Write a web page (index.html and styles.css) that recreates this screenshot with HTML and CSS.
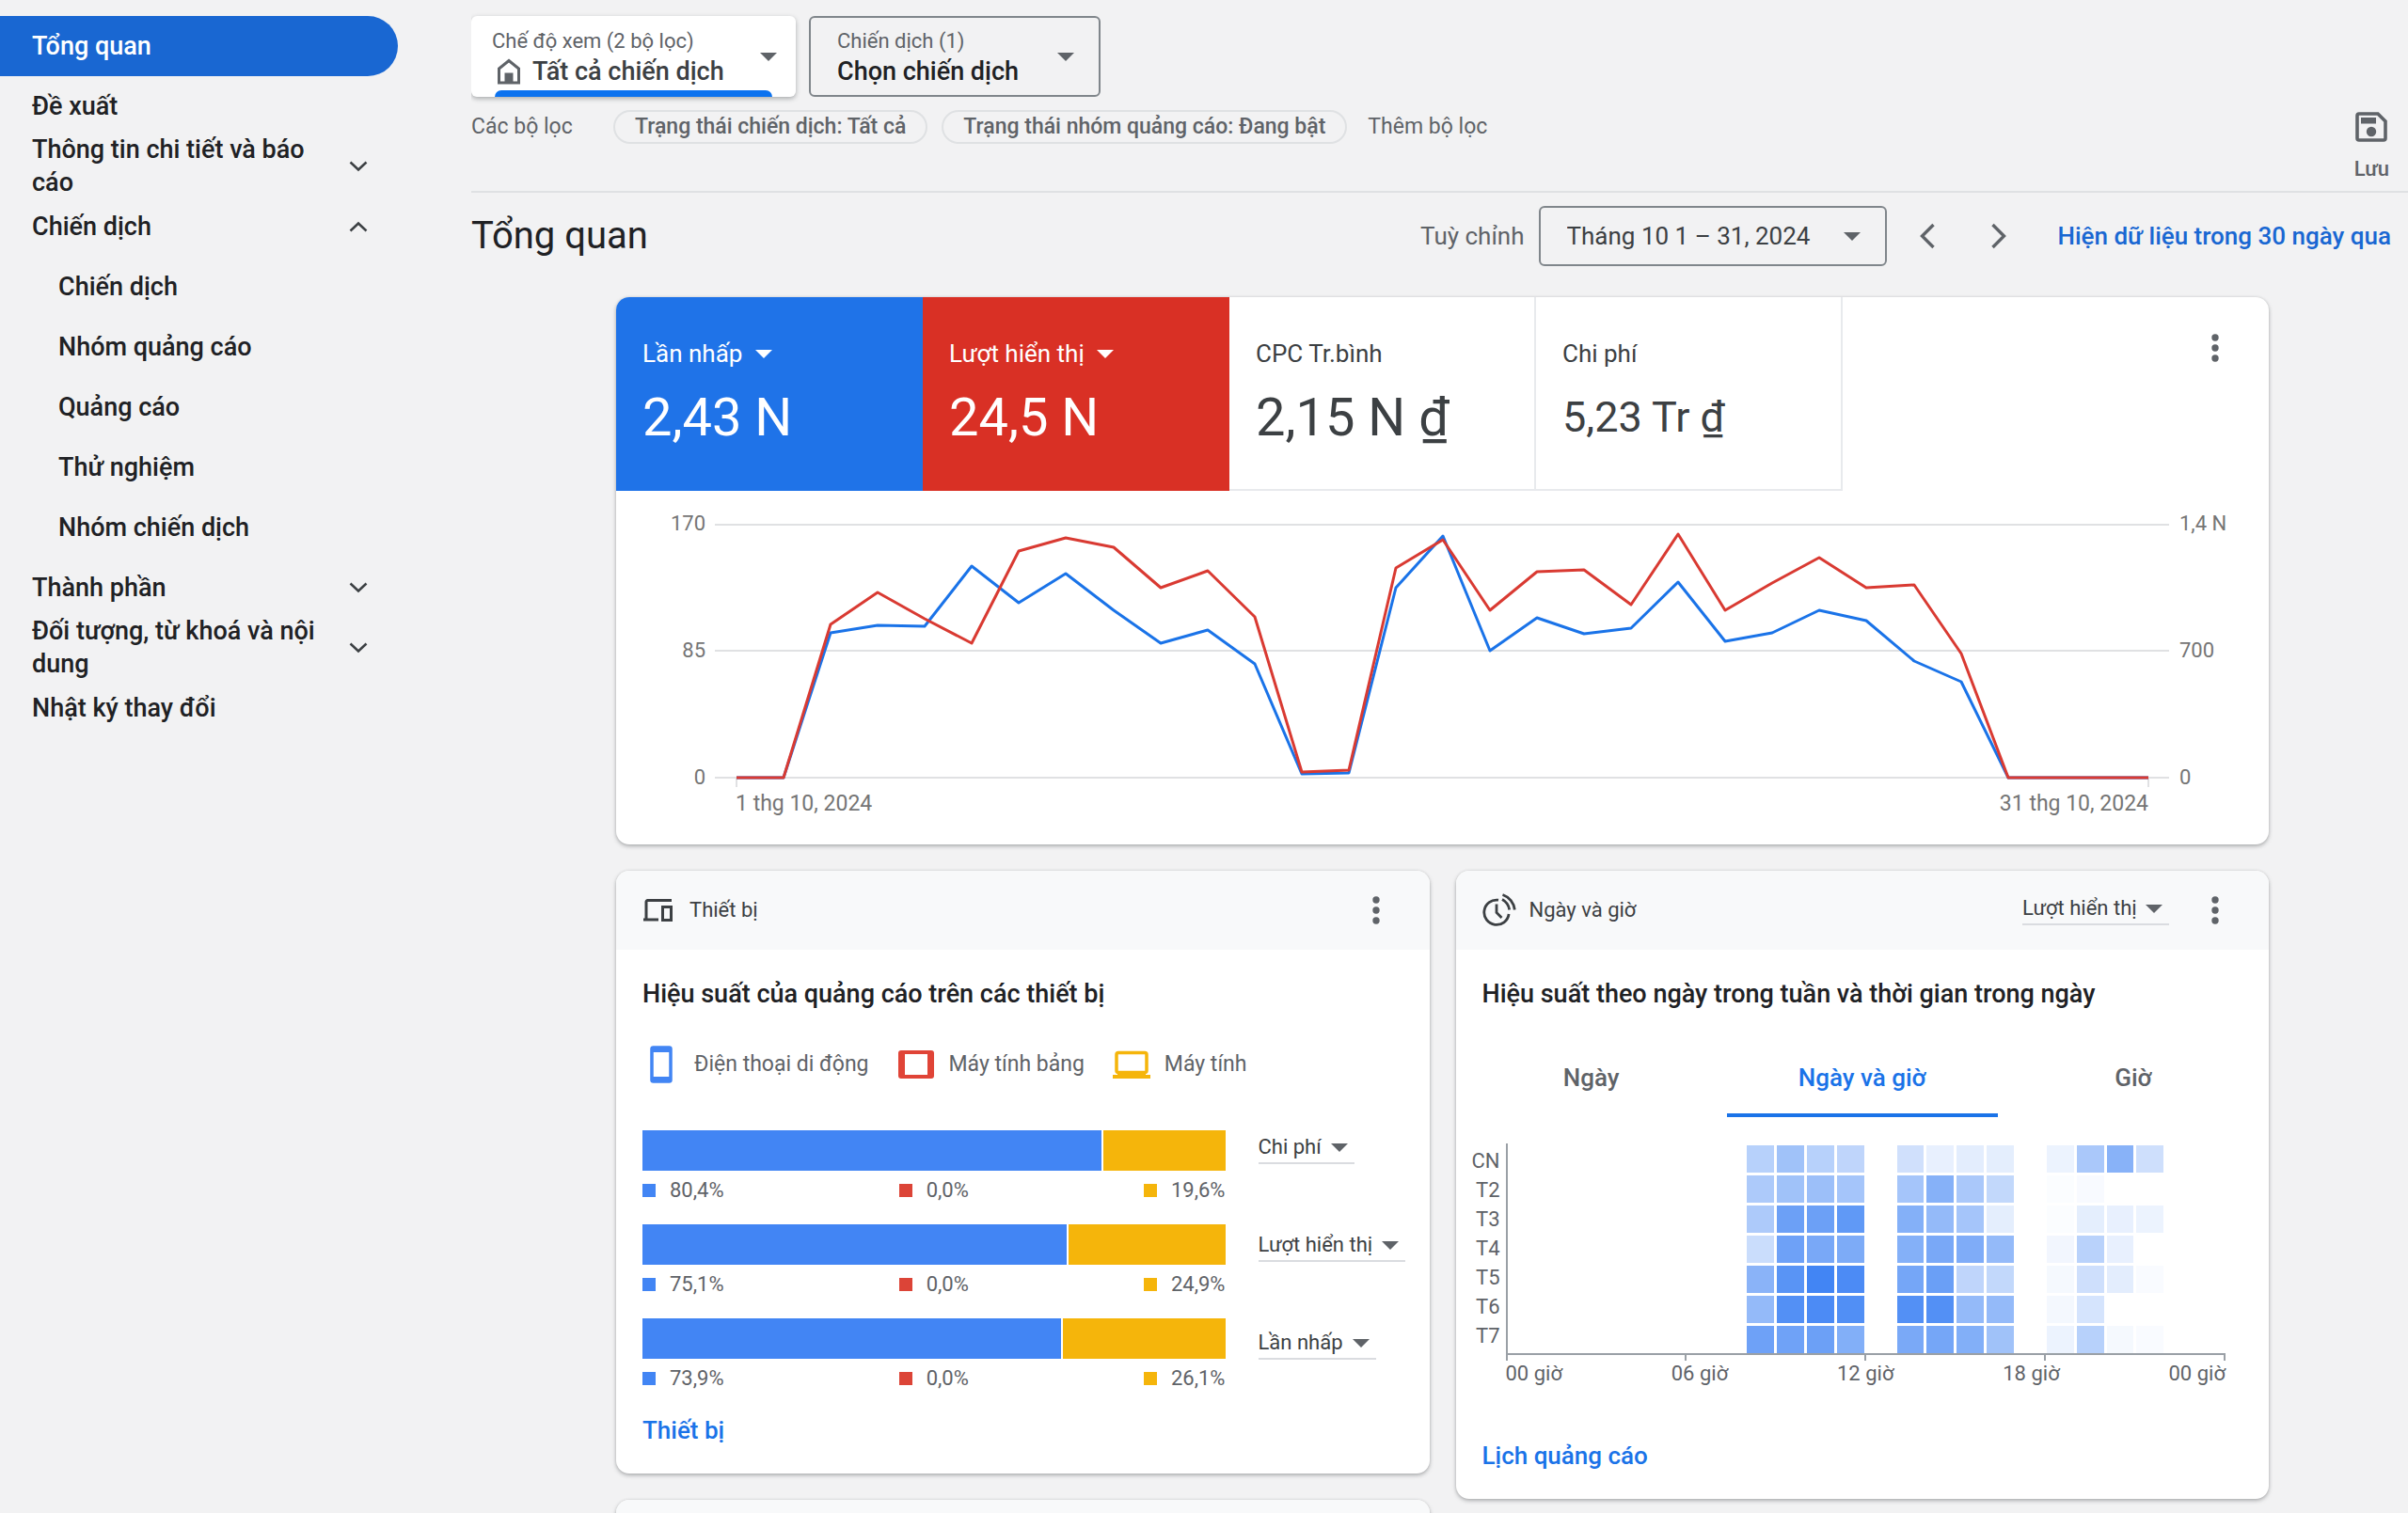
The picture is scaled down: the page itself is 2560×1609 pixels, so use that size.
FILE: index.html
```html
<!DOCTYPE html>
<html lang="vi">
<head>
<meta charset="utf-8">
<meta name="viewport" content="width=device-width, initial-scale=1">
<title>Tổng quan</title>
<link rel="stylesheet" href="styles.css">
</head>
<body>
<svg class="sprite" aria-hidden="true">
  <symbol id="i-down" viewBox="0 0 20 12"><path d="M1.500 1.500 10 9.500 18.500 1.500" fill="none" stroke="currentColor" stroke-width="2.500"/></symbol>
  <symbol id="i-up" viewBox="0 0 20 12"><path d="M1.500 10.500 10 2.500 18.500 10.500" fill="none" stroke="currentColor" stroke-width="2.500"/></symbol>
  <symbol id="i-dots" viewBox="0 0 8 30"><circle cx="4" cy="4" r="3.700"/><circle cx="4" cy="15" r="3.700"/><circle cx="4" cy="26" r="3.700"/></symbol>
</svg>

<nav class="sidebar" aria-label="Điều hướng">
  <a class="nav-item active" href="#">Tổng quan</a>
  <a class="nav-item" href="#">Đề xuất</a>
  <button class="nav-item" type="button"><span>Thông tin chi tiết và báo cáo</span><svg class="chevron"><use href="#i-down"/></svg></button>
  <button class="nav-item" type="button"><span>Chiến dịch</span><svg class="chevron"><use href="#i-up"/></svg></button>
  <a class="nav-item sub" href="#">Chiến dịch</a>
  <a class="nav-item sub" href="#">Nhóm quảng cáo</a>
  <a class="nav-item sub" href="#">Quảng cáo</a>
  <a class="nav-item sub" href="#">Thử nghiệm</a>
  <a class="nav-item sub" href="#">Nhóm chiến dịch</a>
  <button class="nav-item" type="button"><span>Thành phần</span><svg class="chevron"><use href="#i-down"/></svg></button>
  <button class="nav-item" type="button"><span>Đối tượng, từ khoá và nội dung</span><svg class="chevron"><use href="#i-down"/></svg></button>
  <a class="nav-item" href="#">Nhật ký thay đổi</a>
</nav>

<main class="main">
  <header class="toolbar">
    <div class="toolbar-left">
      <div class="scopes">
        <div class="scope scope-view">
          <div class="scope-text">
            <label class="scope-label" for="view">Chế độ xem (2 bộ lọc)</label>
            <div class="scope-value">
              <svg class="home" viewBox="0 0 26 28"><path d="M2.500 26V11L13 2.500 23.500 11V26Z" fill="none" stroke="currentColor" stroke-width="3"/><path d="M8.500 15.500h9V26h-9z" fill="currentColor"/></svg>
              <select id="view"><option>Tất cả chiến dịch</option></select>
            </div>
          </div>
          <span class="caret"></span>
        </div>
        <div class="scope scope-campaign">
          <div class="scope-text">
            <label class="scope-label" for="campaign">Chiến dịch (1)</label>
            <div class="scope-value"><select id="campaign"><option>Chọn chiến dịch</option></select></div>
          </div>
          <span class="caret"></span>
        </div>
      </div>
      <div class="filters">
        <span class="filters-title">Các bộ lọc</span>
        <button class="chip" type="button">Trạng thái chiến dịch: Tất cả</button>
        <button class="chip" type="button">Trạng thái nhóm quảng cáo: Đang bật</button>
        <button class="add-filter" type="button">Thêm bộ lọc</button>
      </div>
    </div>
    <button class="save" type="button">
      <svg viewBox="0 0 34 32"><path d="M4 2h20l8 8v18a2 2 0 0 1-2 2H4a2 2 0 0 1-2-2V4a2 2 0 0 1 2-2Z" fill="none" stroke="currentColor" stroke-width="3.600"/><path d="M6 6h16v6.500H6z" fill="currentColor"/><circle cx="17" cy="21" r="5.200" fill="currentColor"/></svg>
      <span>Lưu</span>
    </button>
  </header>

  <div class="title-row">
    <h1>Tổng quan</h1>
    <div class="date-tools">
      <label class="custom" for="range">Tuỳ chỉnh</label>
      <div class="date-box"><select id="range"><option>Tháng 10 1 – 31, 2024</option></select><span class="caret"></span></div>
      <button class="step" type="button" aria-label="Kỳ trước"><svg viewBox="0 0 18 28"><path d="M15.500 2 3.500 14l12 12" fill="none" stroke="currentColor" stroke-width="3.400"/></svg></button>
      <button class="step" type="button" aria-label="Kỳ sau"><svg viewBox="0 0 18 28"><path d="M2.500 2l12 12-12 12" fill="none" stroke="currentColor" stroke-width="3.400"/></svg></button>
      <a class="recent" href="#">Hiện dữ liệu trong 30 ngày qua</a>
    </div>
  </div>

  <div class="content">
    <section class="card">
      <div class="kpis">
        <div class="kpi kpi-blue">
          <div class="kpi-name"><select aria-label="Chỉ số 1"><option>Lần nhấp</option></select><span class="caret"></span></div>
          <div class="kpi-value">2,43 N</div>
        </div>
        <div class="kpi kpi-red">
          <div class="kpi-name"><select aria-label="Chỉ số 2"><option>Lượt hiển thị</option></select><span class="caret"></span></div>
          <div class="kpi-value">24,5 N</div>
        </div>
        <div class="kpi">
          <div class="kpi-name">CPC Tr.bình</div>
          <div class="kpi-value">2,15 N ₫</div>
        </div>
        <div class="kpi">
          <div class="kpi-name">Chi phí</div>
          <div class="kpi-value kpi-value-small">5,23 Tr ₫</div>
        </div>
        <button class="more" type="button" aria-label="Tuỳ chọn khác"><svg><use href="#i-dots"/></svg></button>
      </div>
      <div class="chart">
        <div class="scale scale-left"><span>170</span><span>85</span><span>0</span></div>
        <div class="plot">
          <svg class="lines" viewBox="0 0 1546 280" preserveAspectRatio="none" role="img" aria-label="Lần nhấp và lượt hiển thị">
            <path class="grid" d="M0 1H1546M0 135H1546M0 270H1546M23 270V280M1524 270V280"/>
            <polyline class="clicks" points="23,270 73,270 123,116 173,108 223,109 273,45 323,84 373,53 424,92 474,127 524,113 574,149 624,266 674,265 724,68 774,13 824,135 874,100 924,117 974,111 1024,62 1074,125 1124,116 1174,92 1224,103 1275,146 1325,168 1375,270 1425,270 1475,270 1524,270"/>
            <polyline class="views" points="23,270 73,270 123,107 173,73 223,101 273,127 323,29 373,15 424,25 474,68 524,50 574,99 624,264 674,262 724,47 774,17 824,92 874,51 924,49 974,86 1024,11 1074,92 1124,63 1174,36 1224,68 1275,65 1325,138 1375,270 1425,270 1475,270 1524,270"/>
          </svg>
          <div class="dates"><span>1 thg 10, 2024</span><span>31 thg 10, 2024</span></div>
        </div>
        <div class="scale scale-right"><span>1,4 N</span><span>700</span><span>0</span></div>
      </div>
    </section>

    <div class="columns">
      <div class="column">
        <section class="card">
          <div class="card-head">
            <svg class="head-icon" viewBox="0 0 36 36"><path d="M4 29V9.500a1.500 1.500 0 0 1 1.500-1.500H31M1 28.500H17" transform="translate(0 -.5)" fill="none" stroke="currentColor" stroke-width="3"/><path d="M21.500 14.500h9v14h-9z" fill="none" stroke="currentColor" stroke-width="3"/></svg>
            <span class="head-title">Thiết bị</span>
            <button class="more" type="button" aria-label="Tuỳ chọn khác"><svg><use href="#i-dots"/></svg></button>
          </div>
          <div class="card-body">
            <h2>Hiệu suất của quảng cáo trên các thiết bị</h2>
            <ul class="legend">
              <li><svg viewBox="0 0 40 40"><rect x="10" y="2" width="20" height="36" rx="1.500" fill="none" stroke="#4285f4" stroke-width="3.500"/><path d="M9 1h22v6H9zM9 33h22v6H9z" fill="#4285f4"/></svg>Điện thoại di động</li>
              <li><svg viewBox="0 0 40 40"><rect x="3" y="7" width="34" height="26" rx="1" fill="none" stroke="#e04437" stroke-width="4"/><path d="M3 7h5v26H3zM32 7h5v26h-5z" fill="#e04437"/></svg>Máy tính bảng</li>
              <li><svg viewBox="0 0 40 40"><rect x="4" y="7.500" width="32" height="21" rx="2" fill="none" stroke="#f5b50b" stroke-width="3.500"/><path d="M0 31h40v4H0zM5 27h30v5H5z" fill="#f5b50b"/></svg>Máy tính</li>
            </ul>
            <div class="devices">
              <div class="bars">
                <div class="bar-group">
                  <div class="bar"><span class="blue" style="width:79%"></span><span class="yellow" style="width:21%"></span></div>
                  <div class="shares"><span class="share blue-key">80,4%</span><span class="share red-key">0,0%</span><span class="share yellow-key">19,6%</span></div>
                </div>
                <div class="bar-group">
                  <div class="bar"><span class="blue" style="width:73%"></span><span class="yellow" style="width:27%"></span></div>
                  <div class="shares"><span class="share blue-key">75,1%</span><span class="share red-key">0,0%</span><span class="share yellow-key">24,9%</span></div>
                </div>
                <div class="bar-group">
                  <div class="bar"><span class="blue" style="width:72%"></span><span class="yellow" style="width:28%"></span></div>
                  <div class="shares"><span class="share blue-key">73,9%</span><span class="share red-key">0,0%</span><span class="share yellow-key">26,1%</span></div>
                </div>
              </div>
              <div class="pickers">
                <div class="picker"><select aria-label="Chỉ số của thanh 1"><option>Chi phí</option></select><span class="caret"></span></div>
                <div class="picker"><select aria-label="Chỉ số của thanh 2"><option>Lượt hiển thị</option></select><span class="caret"></span></div>
                <div class="picker"><select aria-label="Chỉ số của thanh 3"><option>Lần nhấp</option></select><span class="caret"></span></div>
              </div>
            </div>
            <a class="card-link" href="#">Thiết bị</a>
          </div>
        </section>
        <section class="card"><div class="card-head"></div></section>
      </div>

      <div class="column">
        <section class="card">
          <div class="card-head">
            <svg class="head-icon" viewBox="0 0 36 36"><g fill="none" stroke="currentColor" stroke-width="2.800"><path d="M17 7.200A13.200 13.200 0 1 0 28.100 22"/><path d="M15 11.500V20.500L20.500 26"/><path d="M21 6.500A15 15 0 0 1 28.700 17.500"/><path d="M21.500 1.500A19 19 0 0 1 34.300 17.500"/></g></svg>
            <span class="head-title">Ngày và giờ</span>
            <div class="picker"><select aria-label="Chỉ số theo giờ"><option>Lượt hiển thị</option></select><span class="caret"></span></div>
            <button class="more" type="button" aria-label="Tuỳ chọn khác"><svg><use href="#i-dots"/></svg></button>
          </div>
          <div class="card-body card-body-hours">
            <h2>Hiệu suất theo ngày trong tuần và thời gian trong ngày</h2>
            <div class="tabs" role="tablist">
              <button type="button" role="tab">Ngày</button>
              <button type="button" role="tab" class="selected" aria-selected="true">Ngày và giờ</button>
              <button type="button" role="tab">Giờ</button>
            </div>
            <div class="heat">
              <div class="heat-days"><span>CN</span><span>T2</span><span>T3</span><span>T4</span><span>T5</span><span>T6</span><span>T7</span></div>
              <div class="heat-area">
                <div class="heat-cells" id="heat"></div>
                <div class="heat-ticks"><i></i><i></i><i></i><i></i><i></i></div>
                <div class="heat-hours"><span>00 giờ</span><span>06 giờ</span><span>12 giờ</span><span>18 giờ</span><span>00 giờ</span></div>
              </div>
            </div>
            <a class="card-link" href="#">Lịch quảng cáo</a>
          </div>
        </section>
      </div>
    </div>
  </div>
</main>
<script src="heat.js"></script>
</body>
</html>
```
FILE: heat.js
```js
// Share of the peak hour, in percent, for the hours that have traffic.
const hours = [8, 9, 10, 11, 13, 14, 15, 16, 18, 19, 20, 21];
const days = [
  [38, 50, 38, 34, 25, 12, 15, 14, 10, 45, 63, 26],
  [43, 50, 52, 48, 48, 64, 45, 32, 2, 4, 0, 0],
  [43, 78, 78, 84, 65, 57, 48, 14, 2, 14, 12, 10],
  [28, 77, 71, 69, 65, 71, 68, 57, 7, 37, 12, 0],
  [62, 88, 100, 95, 73, 79, 34, 32, 5, 26, 15, 3],
  [57, 91, 95, 92, 91, 91, 57, 57, 6, 22, 0, 0],
  [77, 76, 78, 66, 70, 73, 66, 50, 10, 38, 5, 3]
];
const heat = document.getElementById("heat");
days.forEach((values, day) => {
  values.forEach((value, index) => {
    const cell = document.createElement("span");
    cell.style.gridArea = `${day + 1} / ${hours[index] + 1}`;
    cell.style.opacity = value / 100;
    heat.append(cell);
  });
});
```
FILE: styles.css
```css
* { box-sizing: border-box; }

body {
  margin: 0;
  height: 100vh;
  display: flex;
  background: #f2f2f3;
  color: #3c4043;
  font-family: Roboto, "Noto Sans", sans-serif;
  font-size: 22px;
  line-height: 32px;
}

button, select {
  font: inherit;
  color: inherit;
  background: none;
  border: 0;
  padding: 0;
  margin: 0;
  text-align: left;
}
select { appearance: none; line-height: 32px; }
a { color: #1a73e8; text-decoration: none; }
h1, h2, ul { margin: 0; padding: 0; font-weight: 400; list-style: none; }
svg { display: block; fill: currentColor; }
.sprite { position: absolute; width: 0; height: 0; }

.caret {
  flex: none;
  border: 9px solid transparent;
  border-top-color: #5f6368;
  border-bottom: 0;
  pointer-events: none;
}

/* Sidebar */
.sidebar { flex: none; width: 501px; padding-top: 17px; }
.nav-item {
  display: flex;
  align-items: center;
  justify-content: space-between;
  width: 423px;
  height: 64px;
  padding: 0 32px 0 34px;
  font-size: 27px;
  line-height: 35px;
  font-weight: 500;
  color: #202124;
}
.nav-item span { width: 310px; }
.nav-item.active { background: #1967d2; color: #fff; border-radius: 0 32px 32px 0; }
.nav-item.sub { padding-left: 62px; }
.chevron { width: 20px; height: 12px; color: #3c4043; }

/* Toolbar */
.main { flex: 1; min-width: 0; overflow-y: auto; scrollbar-width: none; }
.toolbar {
  display: flex;
  justify-content: space-between;
  align-items: flex-end;
  padding: 17px 20px 9px 0;
  border-bottom: 2px solid #dfe1e3;
}
.toolbar-left { padding-bottom: 41px; }
.scopes { display: flex; gap: 14px; }
.scope {
  display: flex;
  justify-content: space-between;
  align-items: center;
  width: 345px;
  height: 86px;
  padding: 0 20px 0 22px;
  border-radius: 6px;
  color: #3c4043;
  position: relative;
}
.scope-view { background: #fff; box-shadow: 0 2px 5px rgba(60, 64, 67, .4); }
.scope-view::after {
  content: "";
  position: absolute;
  left: 25px;
  right: 25px;
  bottom: 0;
  height: 7px;
  border-radius: 7px 7px 0 0;
  background: #0b72ef;
}
.scope-campaign { width: 310px; padding: 0 26px 0 28px; border: 2px solid #80868b; color: #202124; }
.scope-label { display: block; color: #5f6368; }
.scope-value { display: flex; align-items: center; gap: 12px; font-size: 27px; font-weight: 500; }
.home { width: 26px; height: 28px; margin-left: 5px; color: #5f6368; }

.filters { display: flex; align-items: center; margin-top: 14px; height: 36px; color: #5f6368; font-size: 23px; }
.filters-title { width: 151px; }
.chip {
  height: 36px;
  padding: 0 21px;
  margin-right: 15px;
  border: 2px solid #dfe1e3;
  border-radius: 18px;
  font-weight: 500;
}
.add-filter { margin-left: 7px; }
.save { display: flex; flex-direction: column; align-items: center; gap: 15px; color: #5f6368; line-height: 28px; font-weight: 500; }
.save svg { width: 34px; height: 32px; }

/* Title and date range */
.title-row { display: flex; justify-content: space-between; align-items: center; padding: 14px 18px 0 0; }
h1 { font-size: 40px; line-height: 64px; color: #202124; }
.date-tools { display: flex; align-items: center; font-size: 26px; }
.custom { color: #5f6368; margin-right: 15px; }
.date-box {
  display: flex;
  align-items: center;
  justify-content: space-between;
  width: 370px;
  height: 64px;
  padding: 0 26px 0 28px;
  border: 2px solid #80868b;
  border-radius: 6px;
}
.step { margin-left: 34px; color: #5f6368; }
.step + .step { margin-left: 58px; }
.step svg { width: 18px; height: 28px; }
.recent { margin-left: 54px; font-weight: 500; color: #1967d2; }

/* Cards */
.content { padding: 33px 148px 28px 154px; }
.card {
  background: #fff;
  border-radius: 14px;
  overflow: hidden;
  box-shadow: 0 2px 4px rgba(60, 64, 67, .36), 0 0 3px rgba(60, 64, 67, .12);
}
.more { display: flex; justify-content: center; width: 40px; color: #5f6368; }
.more svg { width: 8px; height: 30px; }

.kpis { display: grid; grid-template-columns: repeat(4, minmax(0, 326px)) 1fr; }
.kpi { height: 206px; padding: 44px 0 0 28px; border: 0 solid #e8eaed; border-width: 0 2px 2px 0; }
.kpi-name { display: flex; align-items: center; gap: 13px; font-size: 26px; }
.kpi-value { margin-top: 20px; font-size: 56px; line-height: 64px; }
.kpi-value-small { font-size: 45px; }
.kpi-blue { background: #1f73e8; border: 0; color: #fff; }
.kpi-red { background: #d93025; border: 0; color: #fff; }
.kpi .caret { border-top-color: #fff; }
.kpis .more { justify-self: end; align-self: start; margin: 39px 37px 0 0; }

.chart { display: grid; grid-template-columns: 105px 1fr 106px; padding: 19px 0 25px; color: #757575; }
.scale { display: flex; flex-direction: column; justify-content: space-between; height: 302px; }
.scale-left { text-align: right; padding-right: 10px; }
.scale-right { padding-left: 11px; }
.lines { width: 100%; height: 280px; margin-top: 16px; overflow: visible; }
.lines path, .lines polyline { fill: none; stroke-width: 3px; vector-effect: non-scaling-stroke; stroke-linejoin: round; }
.lines .grid { stroke: #e0e1e3; stroke-width: 2px; }
.lines .clicks { stroke: #1a73e8; }
.lines .views { stroke: #d93a32; }
.dates { display: flex; justify-content: space-between; padding: 0 22px; font-size: 23px; line-height: 36px; }

.columns { display: grid; grid-template-columns: 1fr 1fr; gap: 28px; margin-top: 28px; align-items: start; }
.column { display: grid; gap: 28px; }
.card-head { display: flex; align-items: center; height: 84px; padding: 0 37px 0 28px; background: #f8f9fa; }
.head-icon { width: 36px; height: 36px; margin-right: 14px; }
.head-title { flex: 1; }
.card-head .picker { margin: 0 29px 2px 0; }
.card-body { padding: 29px 28px 28px; }
h2 { font-size: 27px; line-height: 36px; font-weight: 500; color: #202124; }

.picker {
  display: flex;
  align-items: center;
  gap: 9px;
  padding-right: 7px;
  border-bottom: 2px solid #dadce0;
}
.card-link { display: inline-block; font-size: 26px; line-height: 36px; font-weight: 500; }

/* Devices */
.legend { display: flex; gap: 30px; margin: 37px 0 50px; color: #5f6368; font-size: 23px; }
.legend li { display: flex; align-items: center; gap: 15px; }
.legend svg { width: 40px; height: 40px; }
.devices { display: flex; gap: 35px; align-items: flex-start; margin-bottom: 21px; }
.bars { display: grid; gap: 20px; flex: 1; }
.bar { display: flex; gap: 2px; height: 43px; }
.bar .blue { background: #4285f4; }
.bar .yellow { background: #f5b50b; }
.shares { display: flex; justify-content: space-between; margin-top: 5px; color: #5f6368; }
.share { display: flex; align-items: center; gap: 15px; }
.share::before { content: ""; width: 14px; height: 14px; background: #4285f4; }
.red-key::before { background: #dc4437; }
.yellow-key::before { background: #f5b50b; }
.pickers { display: flex; flex-direction: column; align-items: flex-start; gap: 70px; width: 154px; padding-top: 2px; }
.pickers .picker { white-space: nowrap; }

/* Day and hour */
.tabs { display: grid; grid-template-columns: repeat(3, 1fr); margin: 41px -28px 28px; }
.tabs button {
  padding: 12px 0 20px;
  border-bottom: 4px solid transparent;
  font-size: 26px;
  line-height: 36px;
  font-weight: 500;
  text-align: center;
  color: #5f6368;
}
.tabs .selected { color: #1a73e8; border-color: #1a73e8; }
.heat { display: flex; margin: 0 18px 55px -28px; color: #5f6368; }
.heat-days { display: flex; flex-direction: column; width: 53px; padding: 3px 6px 0 0; line-height: 31px; text-align: right; }
.heat-area { flex: 1; }
.heat-cells {
  display: grid;
  grid-template-columns: repeat(24, 1fr);
  grid-template-rows: repeat(7, 29px);
  gap: 3px;
  padding: 2px 2px 0 0;
  border: solid #9aa0a6;
  border-width: 0 0 2px 2px;
}
.heat-cells span { background: #4285f4; }
.heat-ticks { display: flex; justify-content: space-between; }
.heat-ticks i { width: 2px; height: 6px; background: #9aa0a6; }
.heat-hours { display: flex; justify-content: space-between; line-height: 28px; }
```
